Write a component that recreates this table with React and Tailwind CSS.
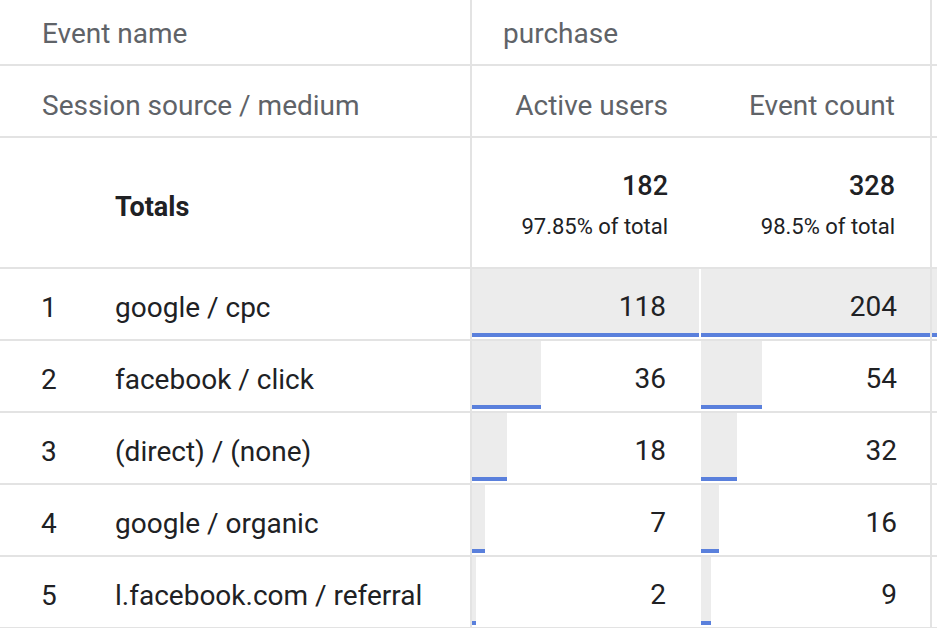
import React from "react";

// Data rows: source / medium with active users and event count
const rows = [
  { id: 1, source: "google / cpc", users: 118, events: 204, extra: 100 },
  { id: 2, source: "facebook / click", users: 36, events: 54, extra: 0 },
  { id: 3, source: "(direct) / (none)", users: 18, events: 32, extra: 0 },
  { id: 4, source: "google / organic", users: 7, events: 16, extra: 0 },
  { id: 5, source: "l.facebook.com / referral", users: 2, events: 9, extra: 0 },
];

const maxUsers = 118;
const maxEvents = 204;

function BarCell({ value, pct, className }) {
  return (
    <div className={`relative h-[70px] ${className}`}>
      {pct > 0 && (
        <div
          className="absolute left-0 top-0 h-[68px] bg-[#ececec] border-b-4 border-[#5a80dc]"
          style={{ width: `${pct}%` }}
        />
      )}
      {value !== undefined && (
        <div className="relative flex h-full items-center justify-end pr-[33px] pt-[6px] text-[28px] text-[#202124]">
          {value}
        </div>
      )}
    </div>
  );
}

export default function App() {
  const grid = "grid grid-cols-[472px_229px_231px_1fr]";

  return (
    <div className="w-[937px] h-[628px] overflow-hidden bg-white font-['Roboto',sans-serif]">
      {/* Header: event name */}
      <div className={`${grid} h-[66px] border-b-2 border-[#e3e3e3]`}>
        <div className="flex items-center pl-[42px] pt-[3px] border-r-2 border-[#e3e3e3] text-[28px] text-[#5f6368]">
          Event name
        </div>
        <div className="col-span-2 flex items-center pl-[31px] pt-[3px] border-r-2 border-[#e3e3e3] text-[28px] text-[#5f6368]">
          purchase
        </div>
        <div />
      </div>

      {/* Header: dimension and metrics */}
      <div className={`${grid} h-[72px] border-b-2 border-[#e3e3e3]`}>
        <div className="flex items-center pl-[42px] pt-[9px] border-r-2 border-[#e3e3e3] text-[28px] text-[#5f6368]">
          Session source / medium
        </div>
        <div className="flex items-center justify-end pr-[33px] pt-[9px] text-[28px] text-[#5f6368]">
          Active users
        </div>
        <div className="flex items-center justify-end pr-[35px] pt-[9px] border-r-2 border-[#e3e3e3] text-[28px] text-[#5f6368]">
          Event count
        </div>
        <div />
      </div>

      {/* Totals */}
      <div className={`${grid} h-[131px] border-b-2 border-[#e3e3e3]`}>
        <div className="flex items-center pl-[115px] pt-[10px] border-r-2 border-[#e3e3e3] text-[27px] font-bold text-[#202124]">
          Totals
        </div>
        <div className="flex flex-col items-end justify-center gap-[16px] pr-[33px] pt-[5px] text-[#202124]">
          <span className="text-[27px] font-medium leading-none">182</span>
          <span className="text-[22px] leading-none">97.85% of total</span>
        </div>
        <div className="flex flex-col items-end justify-center gap-[16px] pr-[35px] pt-[5px] border-r-2 border-[#e3e3e3] text-[#202124]">
          <span className="text-[27px] font-medium leading-none">328</span>
          <span className="text-[22px] leading-none">98.5% of total</span>
        </div>
        <div />
      </div>

      {/* Data rows */}
      {rows.map((row) => (
        <div key={row.id} className={`${grid} h-[72px] border-b-2 border-[#e3e3e3]`}>
          <div className="flex items-center pt-[7px] border-r-2 border-[#e3e3e3] text-[28px] text-[#202124]">
            <span className="w-[115px] pl-[41px]">{row.id}</span>
            <span>{row.source}</span>
          </div>
          <BarCell
            value={row.users}
            pct={(row.users / maxUsers) * 100}
            className="border-r-2 border-white"
          />
          <BarCell
            value={row.events}
            pct={(row.events / maxEvents) * 100}
            className="border-r-2 border-[#e3e3e3]"
          />
          <BarCell pct={row.extra} />
        </div>
      ))}
    </div>
  );
}
